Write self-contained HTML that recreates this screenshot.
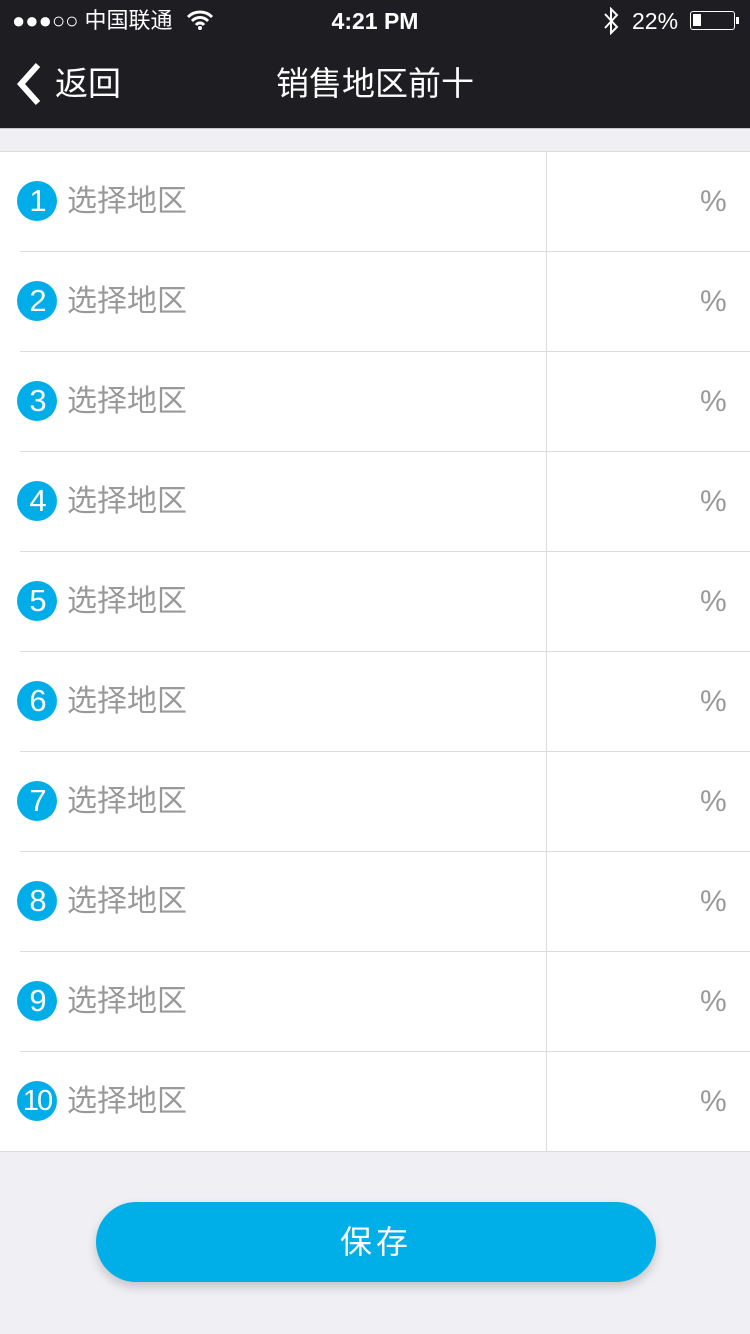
<!DOCTYPE html>
<html><head><meta charset="utf-8"><style>
*{margin:0;padding:0;box-sizing:border-box}
body{width:750px;height:1334px;background:#efeff4;font-family:"Liberation Sans","Noto Sans CJK SC",sans-serif;position:relative;overflow:hidden}
.top{position:absolute;left:0;top:0;width:750px;height:128px;background:#1e1d22;color:#fff}
.hl{position:absolute;top:128px;left:0;width:750px;height:1px;background:#c8c7cc}
.list{position:absolute;top:151px;left:0;width:750px;height:1001px;background:#fff;border-top:1px solid #dcdce0;border-bottom:1px solid #dcdce0}
.row{position:absolute;left:0;width:750px;height:100px}
.sep{position:absolute;left:20px;right:0;bottom:0;height:1px;background:#dcdce0}
.num{position:absolute;left:17px;top:29px;width:40px;height:40px;border-radius:50%;background:#00ade9;color:#fff;font-size:31px;line-height:40px;text-align:center;letter-spacing:-2px}
.t{position:absolute;left:67px;top:30px;font-size:30px;line-height:40px;color:#999}
.p{position:absolute;left:700px;top:30px;font-size:30px;line-height:40px;color:#999}
.v{position:absolute;left:546px;top:0;width:1px;height:1000px;background:#dcdce0}
.btn{position:absolute;left:96px;top:1202px;width:560px;height:80px;border-radius:40px;background:#00aee8;color:#fff;font-size:32px;line-height:80px;text-align:center;box-shadow:0 5px 10px rgba(0,0,0,.18);letter-spacing:4px}
</style></head><body>
<div class="top">
<div style="position:absolute;left:12px;top:6px;font-size:22px;line-height:30px">●●●○○ 中国联通</div>
<svg style="position:absolute;left:186px;top:10px" width="28" height="20" viewBox="0 0 28 20"><path d="M2 7a17 17 0 0 1 24 0M6 11a11 11 0 0 1 16 0M10 15a5 5 0 0 1 8 0" stroke="#fff" stroke-width="3" fill="none"/><circle cx="14" cy="18" r="2" fill="#fff"/></svg>
<div style="position:absolute;left:0;width:750px;top:6px;text-align:center;font-size:23px;font-weight:bold;line-height:30px">4:21 PM</div>
<svg style="position:absolute;left:602px;top:7px" width="18" height="28" viewBox="0 0 18 28"><path d="M3 7l12 13-6 6V2l6 6L3 21" stroke="#fff" stroke-width="2" fill="none"/></svg>
<div style="position:absolute;left:632px;top:6px;font-size:23px;line-height:30px">22%</div>
<div style="position:absolute;left:690px;top:11px;width:45px;height:19px;border:1.5px solid #fff;border-radius:3px"><div style="position:absolute;left:2px;top:2px;width:8px;height:12px;background:#fff"></div></div>
<div style="position:absolute;left:736px;top:17px;width:3px;height:7px;background:#fff"></div>
<svg style="position:absolute;left:16px;top:62px" width="28" height="44" viewBox="0 0 28 44"><path d="M22 3L5 22l17 19" stroke="#fff" stroke-width="6" fill="none"/></svg>
<div style="position:absolute;left:55px;top:62px;font-size:33px;line-height:44px">返回</div>
<div style="position:absolute;left:0;width:750px;top:62px;text-align:center;font-size:33px;line-height:44px">销售地区前十</div>
</div>
<div class="hl"></div>
<div class="list">
<div class="v"></div>
<div class="row" style="top:0"><div class="num">1</div><div class="t">选择地区</div><div class="p">%</div><div class="sep"></div></div>
<div class="row" style="top:100px"><div class="num">2</div><div class="t">选择地区</div><div class="p">%</div><div class="sep"></div></div>
<div class="row" style="top:200px"><div class="num">3</div><div class="t">选择地区</div><div class="p">%</div><div class="sep"></div></div>
<div class="row" style="top:300px"><div class="num">4</div><div class="t">选择地区</div><div class="p">%</div><div class="sep"></div></div>
<div class="row" style="top:400px"><div class="num">5</div><div class="t">选择地区</div><div class="p">%</div><div class="sep"></div></div>
<div class="row" style="top:500px"><div class="num">6</div><div class="t">选择地区</div><div class="p">%</div><div class="sep"></div></div>
<div class="row" style="top:600px"><div class="num">7</div><div class="t">选择地区</div><div class="p">%</div><div class="sep"></div></div>
<div class="row" style="top:700px"><div class="num">8</div><div class="t">选择地区</div><div class="p">%</div><div class="sep"></div></div>
<div class="row" style="top:800px"><div class="num">9</div><div class="t">选择地区</div><div class="p">%</div><div class="sep"></div></div>
<div class="row" style="top:900px"><div class="num" style="font-size:29px">10</div><div class="t">选择地区</div><div class="p">%</div></div>
</div>
<div class="btn">保存</div>
</body></html>
